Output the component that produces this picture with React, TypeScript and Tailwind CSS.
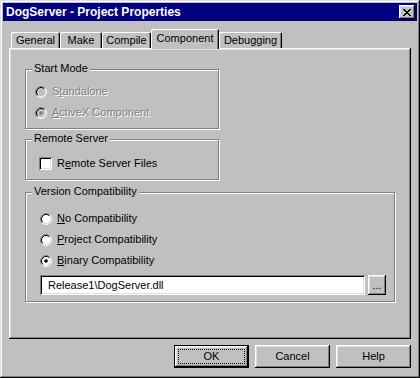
import React from "react";

// Win98 bevels
const raised =
  "shadow-[inset_-1px_-1px_0_#000,inset_1px_1px_0_#fff,inset_-2px_-2px_0_#808080,inset_2px_2px_0_#dfdfdf]";
const sunken =
  "shadow-[inset_1px_1px_0_#808080,inset_-1px_-1px_0_#fff,inset_2px_2px_0_#000,inset_-2px_-2px_0_#dfdfdf]";
const disabledText = "text-[#808080] [text-shadow:1px_1px_0_#fff]";

const tabs = [
  { label: "General", w: "w-[49px]" },
  { label: "Make", w: "w-[42px]" },
  { label: "Compile", w: "w-[49px]" },
  { label: "Component", w: "w-[68px]", active: true },
  { label: "Debugging", w: "w-[63px]" },
];

function Radio({ checked, disabled }: { checked?: boolean; disabled?: boolean }) {
  return (
    <svg width="12" height="12" viewBox="0 0 12 12" className="shrink-0">
      <circle cx="6" cy="6" r="4.2" fill={disabled ? "#c0c0c0" : "#fff"} />
      <path d="M2.11 9.89A5.5 5.5 0 0 1 9.89 2.11" fill="none" stroke="#808080" />
      <path d="M9.89 2.11A5.5 5.5 0 0 1 2.11 9.89" fill="none" stroke="#fff" />
      <path d="M2.82 9.18A4.5 4.5 0 0 1 9.18 2.82" fill="none" stroke="#000" />
      <path d="M9.18 2.82A4.5 4.5 0 0 1 2.82 9.18" fill="none" stroke="#dfdfdf" />
      {checked && <circle cx="6" cy="6" r="1.8" fill={disabled ? "#808080" : "#000"} />}
    </svg>
  );
}

function Group({ label, className, children }: { label: string; className: string; children: React.ReactNode }) {
  return (
    <div className={`relative border border-[#808080] shadow-[1px_1px_0_#fff,inset_1px_1px_0_#fff] ${className}`}>
      <span className="absolute -top-[8px] left-[6px] px-[2px] bg-[#c0c0c0] leading-[13px]">{label}</span>
      {children}
    </div>
  );
}

function Button({ children, isDefault }: { children: React.ReactNode; isDefault?: boolean }) {
  return (
    <div
      className={`w-[75px] h-[23px] flex items-center justify-center bg-[#c0c0c0] ${raised} ${
        isDefault ? "border border-black p-[3px]" : ""
      }`}
    >
      {isDefault ? (
        <div className="w-full h-full border border-dotted border-black flex items-center justify-center">{children}</div>
      ) : (
        children
      )}
    </div>
  );
}

export default function App() {
  return (
    <div className="w-[420px] h-[378px] p-[3px] bg-[#c0c0c0] flex flex-col text-[11px] leading-[13px] text-black font-['Liberation_Sans',Arial,sans-serif] shadow-[inset_-1px_-1px_0_#000,inset_1px_1px_0_#dfdfdf,inset_-2px_-2px_0_#808080,inset_2px_2px_0_#fff]">
      {/* Title bar */}
      <div className="h-[18px] bg-[#000080] flex items-center justify-between pl-[3px] pr-[2px]">
        <span className="text-white font-bold text-[12px]">DogServer - Project Properties</span>
        <div className={`w-[16px] h-[14px] bg-[#c0c0c0] flex items-center justify-center ${raised}`}>
          <svg width="8" height="7" viewBox="0 0 8 7" shapeRendering="crispEdges">
            <path
              d="M0 0h2v1H0zM6 0h2v1H6zM1 1h2v1H1zM5 1h2v1H5zM2 2h4v1H2zM3 3h2v1H3zM2 4h4v1H2zM1 5h2v1H1zM5 5h2v1H5zM0 6h2v1H0zM6 6h2v1H6z"
              fill="#000"
            />
          </svg>
        </div>
      </div>

      <div className="px-[6px] pt-[8px] flex flex-col">
        {/* Tabs */}
        <div className="relative z-10 h-[19px] flex items-end pl-[2px]">
          {tabs.map((t) =>
            t.active ? (
              <div
                key={t.label}
                className={`${t.w} h-[20px] -mb-px bg-[#c0c0c0] rounded-t-[2px] flex justify-center pt-[3px] shadow-[inset_1px_1px_0_#fff,inset_-1px_0_0_#000,inset_-2px_0_0_#808080]`}
              >
                {t.label}
              </div>
            ) : (
              <div
                key={t.label}
                className={`${t.w} h-[16px] rounded-t-[2px] flex justify-center pt-[2px] shadow-[inset_1px_1px_0_#fff,inset_-1px_0_0_#000,inset_-2px_0_0_#808080]`}
              >
                {t.label}
              </div>
            )
          )}
        </div>

        {/* Panel */}
        <div className={`h-[291px] pt-[21px] pl-[16px] flex flex-col items-start ${raised}`}>
          <Group label="Start Mode" className="w-[194px] h-[60px] pt-[11px] pl-[9px]">
            <div className="h-[21px] flex items-center gap-[5px]">
              <Radio disabled />
              <span className={disabledText}>
                S<u className="underline-offset-1">t</u>andalone
              </span>
            </div>
            <div className="h-[21px] flex items-center gap-[5px]">
              <Radio disabled checked />
              <span className={disabledText}>
                <u className="underline-offset-1">A</u>ctiveX Component
              </span>
            </div>
          </Group>

          <Group label="Remote Server" className="mt-[10px] w-[194px] h-[41px] pt-[13px] pl-[13px]">
            <div className="h-[21px] flex items-center gap-[5px]">
              <div className={`w-[13px] h-[13px] bg-white ${sunken}`} />
              <span>
                R<u className="underline-offset-1">e</u>mote Server Files
              </span>
            </div>
          </Group>

          <Group label="Version Compatibility" className="mt-[12px] w-[370px] h-[110px] pt-[15px] pl-[14px]">
            <div className="h-[21px] flex items-center gap-[5px]">
              <Radio />
              <span>
                <u className="underline-offset-1">N</u>o Compatibility
              </span>
            </div>
            <div className="h-[21px] flex items-center gap-[5px]">
              <Radio />
              <span>
                <u className="underline-offset-1">P</u>roject Compatibility
              </span>
            </div>
            <div className="h-[21px] flex items-center gap-[5px]">
              <Radio checked />
              <span>
                <u className="underline-offset-1">B</u>inary Compatibility
              </span>
            </div>
            <div className="mt-[4px] flex gap-[3px]">
              <div className={`w-[325px] h-[20px] bg-white flex items-center pl-[8px] ${sunken}`}>
                Release1\DogServer.dll
              </div>
              <div className={`w-[18px] h-[20px] bg-[#c0c0c0] flex items-end justify-center pb-[3px] ${raised}`}>
                ...
              </div>
            </div>
          </Group>
        </div>

        {/* Buttons */}
        <div className="mt-[6px] flex justify-end gap-[6px]">
          <Button isDefault>OK</Button>
          <Button>Cancel</Button>
          <Button>Help</Button>
        </div>
      </div>
    </div>
  );
}
